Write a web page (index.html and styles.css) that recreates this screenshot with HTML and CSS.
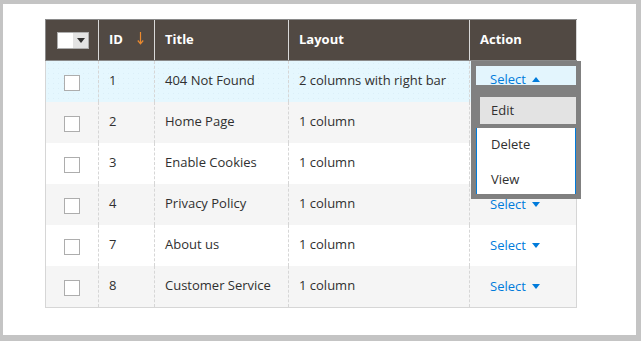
FILE: index.html
```html
<!DOCTYPE html>
<html lang="en">
<head>
  <meta charset="UTF-8">
  <title>Pages grid</title>
  <link rel="stylesheet" href="styles.css">
</head>
<body>

<main class="panel">
  <table class="data-grid">
    <thead>
      <tr>
        <th class="col-check">
          <div class="mass-select">
            <span class="mass-box"></span>
            <span class="mass-toggle"><i></i></span>
          </div>
        </th>
        <th class="col-id">ID<svg class="sort" width="7" height="13" viewBox="0 0 7 13"><path d="M3.5 0 V11.5 M0.8 8.5 L3.5 11.8 L6.2 8.5" stroke="#eb8a2f" stroke-width="1.2" fill="none"/></svg></th>
        <th class="col-title">Title</th>
        <th class="col-layout">Layout</th>
        <th class="col-action">Action</th>
      </tr>
    </thead>
    <tbody>
      <tr class="row-active">
        <td class="col-check"><span class="checkbox"></span></td>
        <td>1</td>
        <td>404 Not Found</td>
        <td>2 columns with right bar</td>
        <td class="col-action">
          <div class="action-wrap _active">
            <button class="action-select">Select <i class="caret up"></i></button>
            <ul class="action-menu">
              <li class="item-edit">Edit</li>
              <li>Delete</li>
              <li>View</li>
            </ul>
          </div>
        </td>
      </tr>
      <tr>
        <td class="col-check"><span class="checkbox"></span></td>
        <td>2</td>
        <td>Home Page</td>
        <td>1 column</td>
        <td class="col-action"><div class="action-wrap"><button class="action-select">Select <i class="caret"></i></button></div></td>
      </tr>
      <tr>
        <td class="col-check"><span class="checkbox"></span></td>
        <td>3</td>
        <td>Enable Cookies</td>
        <td>1 column</td>
        <td class="col-action"><div class="action-wrap"><button class="action-select">Select <i class="caret"></i></button></div></td>
      </tr>
      <tr>
        <td class="col-check"><span class="checkbox"></span></td>
        <td>4</td>
        <td>Privacy Policy</td>
        <td>1 column</td>
        <td class="col-action"><div class="action-wrap"><button class="action-select">Select <i class="caret"></i></button></div></td>
      </tr>
      <tr>
        <td class="col-check"><span class="checkbox"></span></td>
        <td>7</td>
        <td>About us</td>
        <td>1 column</td>
        <td class="col-action"><div class="action-wrap"><button class="action-select">Select <i class="caret"></i></button></div></td>
      </tr>
      <tr>
        <td class="col-check"><span class="checkbox"></span></td>
        <td>8</td>
        <td>Customer Service</td>
        <td>1 column</td>
        <td class="col-action"><div class="action-wrap"><button class="action-select">Select <i class="caret"></i></button></div></td>
      </tr>
    </tbody>
  </table>
</main>

</body>
</html>
```

FILE: styles.css
```css
body {
  margin: 0;
  padding: 4px 5px 6px 3px;
  background-color: #c4c4c4;
  font-family: 'Open Sans', sans-serif;
  font-size: 13px;
  color: #303030;
}

.panel {
  background-color: #fff;
  height: 331px;
  padding: 15px 0 0 42px;
  box-sizing: border-box;
}

.data-grid {
  border-collapse: collapse;
  table-layout: fixed;
  width: 531px;
  border: 1px solid #d6d6d6;
}

.data-grid th {
  height: 37px;
  background-color: #514943;
  color: #fff;
  font-weight: 700;
  text-align: left;
  white-space: nowrap;
  padding: 0 10px 3px;
  border-top: 1px solid #8a8a8a;
  border-left: 1px solid #d9d9d9;
  border-bottom: 1px solid #8a8a8a;
}

.data-grid th:first-child {
  border-left: 1px solid #8a8a8a;
}

.data-grid td {
  height: 38px;
  padding: 0 10px 3px;
  border-left: 1px dashed #d6d6d6;
  vertical-align: middle;
  white-space: nowrap;
}

.data-grid td:first-child {
  border-left: none;
}

.data-grid tbody tr:nth-child(even) {
  background-color: #f5f5f5;
}

.data-grid tbody tr.row-active {
  background-color: #e5f7fe;
  background-image: radial-gradient(#dbeff8 0.6px, transparent 0.8px);
  background-size: 5px 5px;
}

.col-check { width: 31px; text-align: center; }
.data-grid th.col-check { padding: 0 10px 0 11px; height: 40px; }
.data-grid td.col-check { padding: 0 10px; height: 41px; }
.col-id { width: 35px; }
.col-title { width: 113px; }
.col-layout { width: 160px; }
.col-action { width: 86px; }

.data-grid td.col-action {
  padding: 0 0 2px 6px;
}

.sort {
  margin-left: 14px;
  vertical-align: -1px;
}

.mass-select {
  display: flex;
  width: 30px;
  height: 15px;
  border: 1px solid #adadad;
}

.mass-box {
  width: 15px;
  background-color: #fff;
}

.mass-toggle {
  flex: 1;
  background-color: #e3e3e3;
  display: flex;
  align-items: center;
  justify-content: center;
}

.mass-toggle i {
  border-left: 4px solid transparent;
  border-right: 4px solid transparent;
  border-top: 5px solid #303030;
}

.checkbox {
  display: inline-block;
  width: 14px;
  height: 14px;
  border: 1px solid #adadad;
  background-color: #fff;
  vertical-align: middle;
}

.action-wrap {
  position: relative;
  width: 100px;
}

.action-select {
  display: block;
  width: 100px;
  height: 24px;
  padding: 0 0 0 14px;
  border: none;
  background: transparent;
  font-family: inherit;
  font-size: 13px;
  color: #007bdb;
  text-align: left;
}

.caret {
  display: inline-block;
  margin-left: 3px;
  border-left: 4.5px solid transparent;
  border-right: 4.5px solid transparent;
  border-top: 5px solid #007bdb;
  vertical-align: 2px;
}

.caret.up {
  border-top: none;
  border-bottom: 5px solid #007bdb;
}

.action-wrap._active {
  top: -3px;
}

._active .action-select {
  padding-top: 3px;
  background-color: #e3f5fd;
  box-shadow: 0 0 0 5px #808080;
}

.action-menu {
  position: absolute;
  top: 24px;
  left: 0;
  width: 100px;
  margin: 0;
  padding: 0;
  list-style: none;
  background-color: #fff;
  border-left: 1px solid #007bdb;
  border-right: 1px solid #007bdb;
  box-sizing: border-box;
  box-shadow: 0 0 0 5px #808080;
  z-index: 2;
}

.action-menu li {
  height: 33px;
  line-height: 33px;
  padding-left: 14px;
  color: #303030;
}

.action-menu li.item-edit {
  height: 27px;
  line-height: 27px;
  margin-left: -1px;
  margin-right: -1px;
  padding-left: 11px;
  background-color: #e3e3e3;
  border-style: solid;
  border-color: #808080;
  border-width: 7px 0 4px 4px;
}

.action-menu li:last-child {
  line-height: 36px;
}
```
